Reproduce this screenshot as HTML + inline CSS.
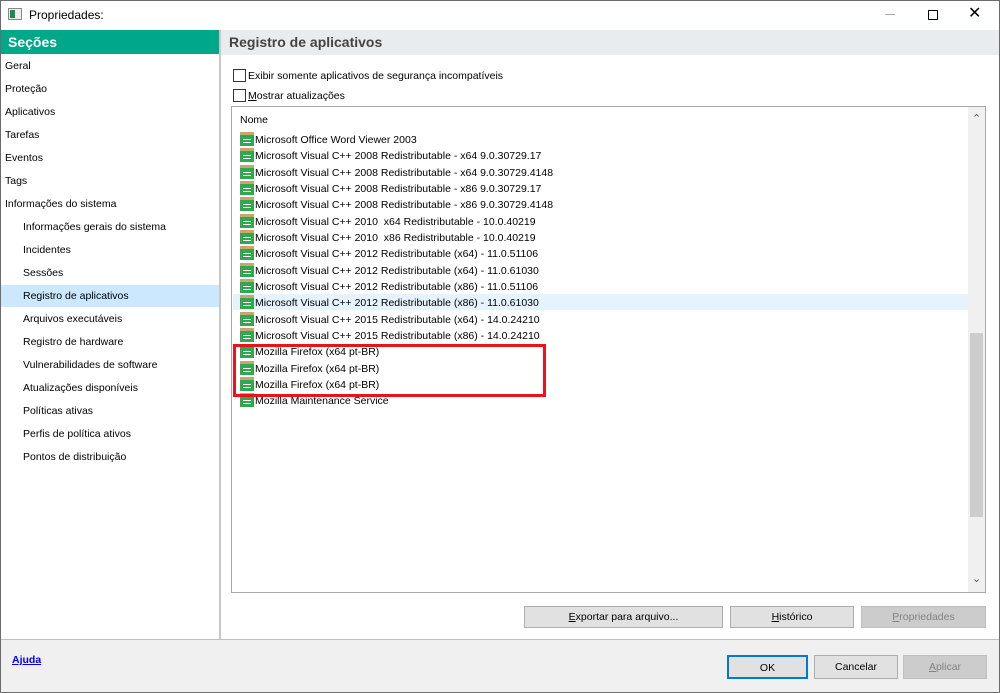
<!DOCTYPE html>
<html><head><meta charset="utf-8"><style>
*{margin:0;padding:0;box-sizing:border-box}
body{width:1000px;height:693px;overflow:hidden;font-family:"Liberation Sans",sans-serif;font-size:10.5px;color:#000;background:#fff;position:relative}
.abs{position:absolute}
.win{position:absolute;left:0;top:0;width:1000px;height:693px;border:1px solid #6b6b6b}
.side div{position:absolute;left:5px;height:23px;line-height:23px;font-size:10.5px}
.side div.s{left:23px}
.row{position:absolute;left:240px;height:16px;line-height:16px;white-space:nowrap;font-size:10.5px}
.ic{display:inline-block;width:14px;height:14px;vertical-align:-3px;margin-right:1px;position:relative}
.btn{position:absolute;border:1px solid #adadad;background:#e1e1e1;text-align:center;font-size:10.5px}
.dis{background:#cccccc;border-color:#bfbfbf;color:#838383}
.cb{position:absolute;width:13px;height:13px;border:1px solid #333;background:#fff}
</style></head><body>
<div class="win"></div>
<div class="abs" style="left:8px;top:8px;width:14px;height:12px;border:1px solid #888;background:#eee"><div style="position:absolute;left:1px;top:1px;width:5px;height:8px;background:#1a8a5a"></div></div>
<div class="abs" style="left:29px;top:8px;font-size:12px">Propriedades:</div>
<div class="abs" style="left:885px;top:14px;width:10px;height:1px;background:#aaa"></div>
<div class="abs" style="left:928px;top:10px;width:10px;height:10px;border:1px solid #000"></div>
<div class="abs" style="left:968px;top:3px;font-size:16px">✕</div>
<div class="abs" style="left:1px;top:30px;width:218px;height:24px;background:#00a88a;color:#fff;font-weight:bold;font-size:14px;line-height:24px;padding-left:7px">Seções</div>
<div class="abs" style="left:219px;top:30px;width:2px;height:609px;background:#c8c8c8"></div>
<div class="abs" style="left:221px;top:30px;width:778px;height:25px;background:#e8ecee;color:#444;font-weight:bold;font-size:14px;line-height:25px;padding-left:8px">Registro de aplicativos</div>
<div class="abs" style="left:1px;top:285px;width:218px;height:22px;background:#cce8ff"></div>
<div class="side">
<div style="top:55px">Geral</div><div style="top:78px">Proteção</div><div style="top:101px">Aplicativos</div><div style="top:124px">Tarefas</div><div style="top:147px">Eventos</div><div style="top:170px">Tags</div><div style="top:193px">Informações do sistema</div>
<div class="s" style="top:216px">Informações gerais do sistema</div><div class="s" style="top:239px">Incidentes</div><div class="s" style="top:262px">Sessões</div><div class="s" style="top:285px">Registro de aplicativos</div><div class="s" style="top:308px">Arquivos executáveis</div><div class="s" style="top:331px">Registro de hardware</div><div class="s" style="top:354px">Vulnerabilidades de software</div><div class="s" style="top:377px">Atualizações disponíveis</div><div class="s" style="top:400px">Políticas ativas</div><div class="s" style="top:423px">Perfis de política ativos</div><div class="s" style="top:446px">Pontos de distribuição</div>
</div>
<div class="cb" style="left:233px;top:69px"></div><div class="abs" style="left:248px;top:70px">Exibir somente aplicativos de segurança incompatíveis</div>
<div class="cb" style="left:233px;top:89px"></div><div class="abs" style="left:248px;top:90px"><u>M</u>ostrar atualizações</div>
<div class="abs" style="left:231px;top:106px;width:755px;height:487px;border:1px solid #a8a8a8"></div>
<div class="abs" style="left:240px;top:114px">Nome</div>
<div class="abs" style="left:968px;top:107px;width:17px;height:485px;background:#f0f0f0"></div>
<div class="abs" style="left:970px;top:333px;width:13px;height:184px;background:#cdcdcd"></div>
<div class="abs" style="left:972px;top:112px;font-size:11px;color:#555">⌃</div>
<div class="abs" style="left:972px;top:572px;font-size:11px;color:#555">⌄</div>
<div class="abs" style="left:233px;top:294px;width:735px;height:16px;background:#e5f3ff"></div>
<div id="rows"></div>
<div class="abs" style="left:233px;top:344px;width:313px;height:53px;border:3px solid #e8141b"></div>
<div class="btn" style="left:524px;top:606px;width:199px;height:22px;line-height:20px"><u>E</u>xportar para arquivo...</div>
<div class="btn" style="left:730px;top:606px;width:124px;height:22px;line-height:20px"><u>H</u>istórico</div>
<div class="btn dis" style="left:861px;top:606px;width:125px;height:22px;line-height:20px"><u>P</u>ropriedades</div>
<div class="abs" style="left:1px;top:639px;width:998px;height:53px;background:#f0f0f0;border-top:1px solid #c0c0c0"></div>
<div class="abs" style="left:12px;top:654px;color:#0000ee;font-weight:bold;text-decoration:underline">Ajuda</div>
<div class="btn" style="left:727px;top:655px;width:81px;height:24px;line-height:22px;border:2px solid #0078d7">OK</div>
<div class="btn" style="left:814px;top:655px;width:84px;height:24px;line-height:22px">Cancelar</div>
<div class="btn dis" style="left:903px;top:655px;width:84px;height:24px;line-height:22px"><u>A</u>plicar</div>
<script>
var n=["Microsoft Office Word Viewer 2003","Microsoft Visual C++ 2008 Redistributable - x64 9.0.30729.17","Microsoft Visual C++ 2008 Redistributable - x64 9.0.30729.4148","Microsoft Visual C++ 2008 Redistributable - x86 9.0.30729.17","Microsoft Visual C++ 2008 Redistributable - x86 9.0.30729.4148","Microsoft Visual C++ 2010&nbsp; x64 Redistributable - 10.0.40219","Microsoft Visual C++ 2010&nbsp; x86 Redistributable - 10.0.40219","Microsoft Visual C++ 2012 Redistributable (x64) - 11.0.51106","Microsoft Visual C++ 2012 Redistributable (x64) - 11.0.61030","Microsoft Visual C++ 2012 Redistributable (x86) - 11.0.51106","Microsoft Visual C++ 2012 Redistributable (x86) - 11.0.61030","Microsoft Visual C++ 2015 Redistributable (x64) - 14.0.24210","Microsoft Visual C++ 2015 Redistributable (x86) - 14.0.24210","Mozilla Firefox (x64 pt-BR)","Mozilla Firefox (x64 pt-BR)","Mozilla Firefox (x64 pt-BR)","Mozilla Maintenance Service"];
var h="";for(var i=0;i<n.length;i++){var t=132+i*16.33;h+='<div class="row" style="top:'+t+'px"><span class="ic"><span style="position:absolute;left:0;top:0;width:14px;height:3px;background:#c8a86a"></span><span style="position:absolute;left:0;top:3px;width:14px;height:11px;background:#2fa84f"></span><span style="position:absolute;left:3px;top:7px;width:8px;height:1px;background:#fff"></span><span style="position:absolute;left:3px;top:10px;width:8px;height:1px;background:#fff"></span></span>'+n[i]+'</div>';}
document.getElementById("rows").innerHTML=h;
</script>
</body></html>
